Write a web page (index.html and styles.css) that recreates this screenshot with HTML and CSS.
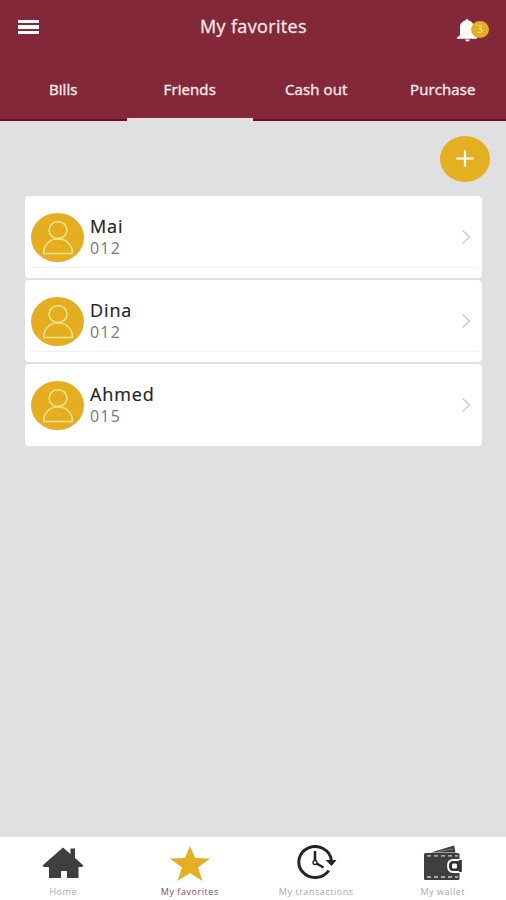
FILE: index.html
```html
<!DOCTYPE html>
<html lang="en">
<head>
  <meta charset="UTF-8" />
  <meta name="viewport" content="width=device-width, initial-scale=1.0"/>
  <title>My favorites</title>
  <link rel="stylesheet" href="styles.css">
</head>
<body>
  <!-- shared icons -->
  <svg class="hidden">
    <symbol id="icon-user" viewBox="0 0 52 48">
      <ellipse cx="26.5" cy="16.8" rx="8.8" ry="8.3"/>
      <path d="M12.3 39.8c0-8.200 6-14.600 14.200-14.600S40.700 31.600 40.700 39.800z"/>
    </symbol>
    <symbol id="icon-chevron" viewBox="0 0 10 16">
      <path d="M1.5 1.5 8.5 8l-7 6.500"/>
    </symbol>
  </svg>

  <header>
    <div class="topbar">
      <button class="menu" aria-label="Menu"><span></span><span></span><span></span></button>
      <h1>My favorites</h1>
      <button class="bell" aria-label="Notifications">
        <svg width="24" height="24" viewBox="0 0 24 24" fill="#fff">
          <path d="M9.500 2.500a1.500 1.500 0 0 1 3 0c3.200.7 5.300 3 5.300 6.500v6.500c0 2 .7 2.800 3.200 3.800v1.400H1v-1.400c2.500-1 3-1.800 3-3.800V9c0-3.500 2.300-5.800 5.500-6.500z"/>
          <path d="M9 21.500h5c-.3 1.300-1.200 2-2.500 2S9.300 22.800 9 21.500z"/>
        </svg>
        <span class="badge">3</span>
      </button>
    </div>
    <nav class="tabs">
      <a>Bills</a>
      <a class="active">Friends</a>
      <a>Cash out</a>
      <a>Purchase</a>
    </nav>
  </header>

  <main>
    <button class="add" aria-label="Add">
      <svg width="50" height="46" viewBox="0 0 50 46" stroke="#fff" stroke-width="2.2">
        <path d="M16.300 22.500h17.500M25 14.300v16.500"/>
      </svg>
    </button>
    <ul class="friends">
      <li>
        <svg class="avatar"><use href="#icon-user"/></svg>
        <div class="info"><strong>Mai</strong><span>012</span></div>
        <svg class="chevron"><use href="#icon-chevron"/></svg>
      </li>
      <li>
        <svg class="avatar"><use href="#icon-user"/></svg>
        <div class="info"><strong>Dina</strong><span>012</span></div>
        <svg class="chevron"><use href="#icon-chevron"/></svg>
      </li>
      <li>
        <svg class="avatar"><use href="#icon-user"/></svg>
        <div class="info"><strong>Ahmed</strong><span>015</span></div>
        <svg class="chevron"><use href="#icon-chevron"/></svg>
      </li>
    </ul>
  </main>

  <footer>
    <a>
      <svg width="42" height="36" viewBox="0 0 42 36" fill="#3f3f3f">
        <path d="M.5 20.500 21 2.500l7.500 6.500V3.500h4.500v9.500l8.500 7.500-1.500 1.500h-3.500v11H25v-7h-6v7H7V22H2z"/>
      </svg>
      <span>Home</span>
    </a>
    <a class="current">
      <svg width="42" height="36" viewBox="0 0 42 36" fill="#e4b021">
        <path d="M21 1l5 12 15 .5-12 9 4.500 13.500L21 28 8.500 36 13 22.500l-12-9 15-.5z"/>
      </svg>
      <span>My favorites</span>
    </a>
    <a>
      <svg width="42" height="36" viewBox="0 0 42 36" fill="none" stroke="#252525">
        <path d="M36.300 15A16.300 15.500 0 1 0 33.800 25.500" stroke-width="3"/>
        <path d="M30.500 15h11l-5 6z" fill="#252525" stroke="none"/>
        <path d="M20 6v11M20 17.500l8.500 5" stroke-width="2.600"/>
        <circle cx="20" cy="17.500" r="2" fill="#fff" stroke-width="1.300"/>
      </svg>
      <span>My transactions</span>
    </a>
    <a>
      <svg width="40" height="36" viewBox="0 0 40 36">
        <path d="M8 7.500 31 .5l1.500 7z" fill="#3b3b3b"/>
        <path d="M15 6.500 30 4" stroke="#999" stroke-width=".8"/>
        <rect x="1" y="8" width="35.500" height="27" rx="1.500" fill="#3f3f3f"/>
        <path d="M4 10.800h31M4 32h31" stroke="#ccc" stroke-width="1.300" stroke-dasharray="4 3"/>
        <path d="M39 15H30q-5 0-5 6t5 6h9z" fill="#333" stroke="#fff" stroke-width="1.800"/>
        <rect x="29" y="18.500" width="5" height="5" rx="1.500" fill="#fff"/>
        <path d="M37.500 15v12" stroke="#333" stroke-width="2.600"/>
      </svg>
      <span>My wallet</span>
    </a>
  </footer>
</body>
</html>
```
FILE: styles.css
```css
* {
  box-sizing: border-box;
}
body {
  margin: 0;
  height: 100vh;
  display: flex;
  flex-direction: column;
  background: #e0e0e0;
  font-family: "Open Sans", "Noto Sans", sans-serif;
}
button {
  border: none;
  padding: 0;
  background: none;
  font-family: inherit;
}
svg {
  display: block;
}
.hidden {
  display: none;
}

/* header */
header {
  height: 121px;
  background: #832839;
  border-bottom: 2px solid #78062f;
  color: #f5e9e9;
  flex-shrink: 0;
}
.topbar {
  height: 56px;
  padding: 0 17px 0 18px;
  display: grid;
  grid-template-columns: 60px 1fr 60px;
  align-items: center;
}
.topbar h1 {
  margin: 0 0 4px 0;
  font-size: 18px;
  font-weight: 400;
  line-height: 24px;
  letter-spacing: 0.35px;
  -webkit-text-stroke: 0.3px;
  text-align: center;
  white-space: nowrap;
}
.menu {
  width: 21px;
  display: flex;
  flex-direction: column;
  gap: 2px;
  margin-bottom: 2px;
}
.menu span {
  height: 3.5px;
  background: #fff;
}
.bell {
  position: relative;
  justify-self: end;
  width: 33px;
  height: 24px;
  margin-top: 3px;
}
.badge {
  position: absolute;
  left: 15px;
  top: 3px;
  width: 18px;
  height: 17px;
  border-radius: 50%;
  background: #e4ae24;
  color: #fbe9a8;
  font-size: 10px;
  line-height: 17px;
  text-align: center;
}
.tabs {
  height: 65px;
  display: grid;
  grid-template-columns: repeat(4, 1fr);
}
.tabs a {
  padding-top: 22px;
  font-size: 15px;
  line-height: 22px;
  letter-spacing: 0.1px;
  -webkit-text-stroke: 0.4px;
  text-align: center;
  white-space: nowrap;
}
.tabs .active {
  border-bottom: 3px solid #e8dfe1;
}

/* content */
main {
  flex: 1;
  padding: 15px 24px 0 25px;
}
.add {
  display: block;
  width: 50px;
  height: 46px;
  margin: 0 -8px 14px auto;
  border-radius: 50%;
  background: #e4b021;
}
.friends {
  list-style: none;
  margin: 0;
  padding: 0;
  display: flex;
  flex-direction: column;
  gap: 2px;
}
.friends li {
  height: 82px;
  padding: 0 11px 0 6px;
  border-radius: 4px;
  background: #fff;
  display: flex;
  align-items: center;
}
.friends li:not(:last-child) {
  background: linear-gradient(#f2f2f2, #f2f2f2) 5px 71px / 448px 1px no-repeat #fff;
}
.avatar {
  width: 53px;
  height: 49px;
  border-radius: 50%;
  background: #e4ae20;
  fill: none;
  stroke: #fbe58c;
  stroke-width: 1.5;
}
.info {
  flex: 1;
  margin-left: 6px;
  display: flex;
  flex-direction: column;
}
.info strong {
  font-size: 18px;
  font-weight: 400;
  line-height: 22px;
  letter-spacing: 0.9px;
  -webkit-text-stroke: 0.2px;
  color: #222;
}
.info span {
  font-size: 16px;
  line-height: 22px;
  letter-spacing: 1.2px;
  color: #777;
}
.chevron {
  width: 10px;
  height: 16px;
  fill: none;
  stroke: #ccc;
  stroke-width: 1.5;
}

/* bottom navigation */
footer {
  height: 63px;
  background: #fff;
  display: grid;
  grid-template-columns: repeat(4, 1fr);
  flex-shrink: 0;
}
footer a {
  padding-top: 8px;
  display: flex;
  flex-direction: column;
  align-items: center;
  font-size: 9px;
  line-height: 12px;
  letter-spacing: 0.55px;
  color: #aaa;
  white-space: nowrap;
}
footer svg {
  margin-bottom: 5px;
}
footer .current {
  color: #8b4a56;
}
```
